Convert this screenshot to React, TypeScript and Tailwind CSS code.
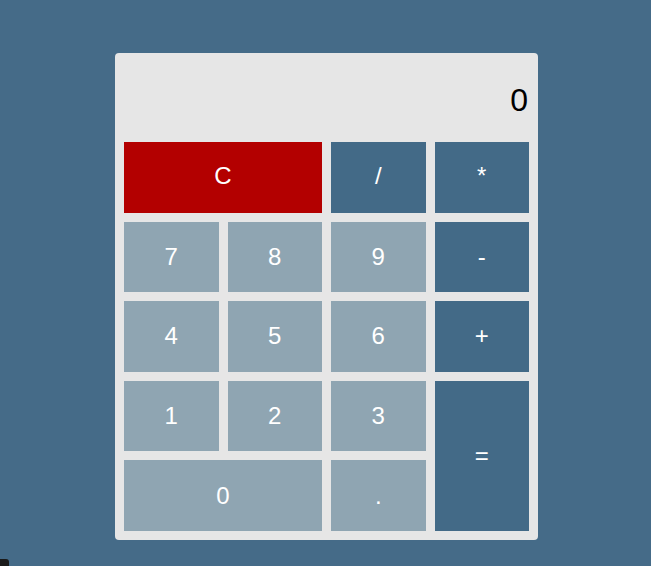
export default function App() {
  const num = "bg-[#8fa5b2] text-white text-[24px] flex items-center justify-center";
  const op = "bg-[#436a87] text-white text-[24px] flex items-center justify-center";

  return (
    <div
      className="relative w-[651px] h-[566px] bg-[#456b88] flex pl-[115px] pt-[53px]"
      style={{ fontFamily: '"Liberation Sans", Arial, sans-serif' }}
    >
      <div className="w-[423px] h-[487px] bg-[#e6e6e6] rounded-[4px] p-[9px] flex flex-col">
        {/* Display */}
        <div className="h-[80px] flex items-center justify-end pr-[1px] pb-[4px] text-[32px] text-black">0</div>
        {/* Keys */}
        <div className="grid grid-cols-4 grid-rows-5 gap-[9px] flex-1">
          <div className="col-span-2 bg-[#b30000] text-white text-[24px] flex items-center justify-center pb-[2px]">C</div>
          <div className={`${op} pb-[2px]`}>/</div>
          <div className={`${op} pb-[2px]`}>*</div>
          <div className={num}>7</div>
          <div className={num}>8</div>
          <div className={num}>9</div>
          <div className={op}>-</div>
          <div className={num}>4</div>
          <div className={num}>5</div>
          <div className={num}>6</div>
          <div className={op}>+</div>
          <div className={num}>1</div>
          <div className={num}>2</div>
          <div className={num}>3</div>
          <div className={`row-span-2 ${op}`}>=</div>
          <div className={`col-span-2 ${num}`}>0</div>
          <div className={num}>.</div>
        </div>
      </div>
      <div className="absolute left-0 bottom-0 w-[9px] h-[7px] bg-[#1a1a1a] rounded-tr-[3px]" />
    </div>
  );
}
